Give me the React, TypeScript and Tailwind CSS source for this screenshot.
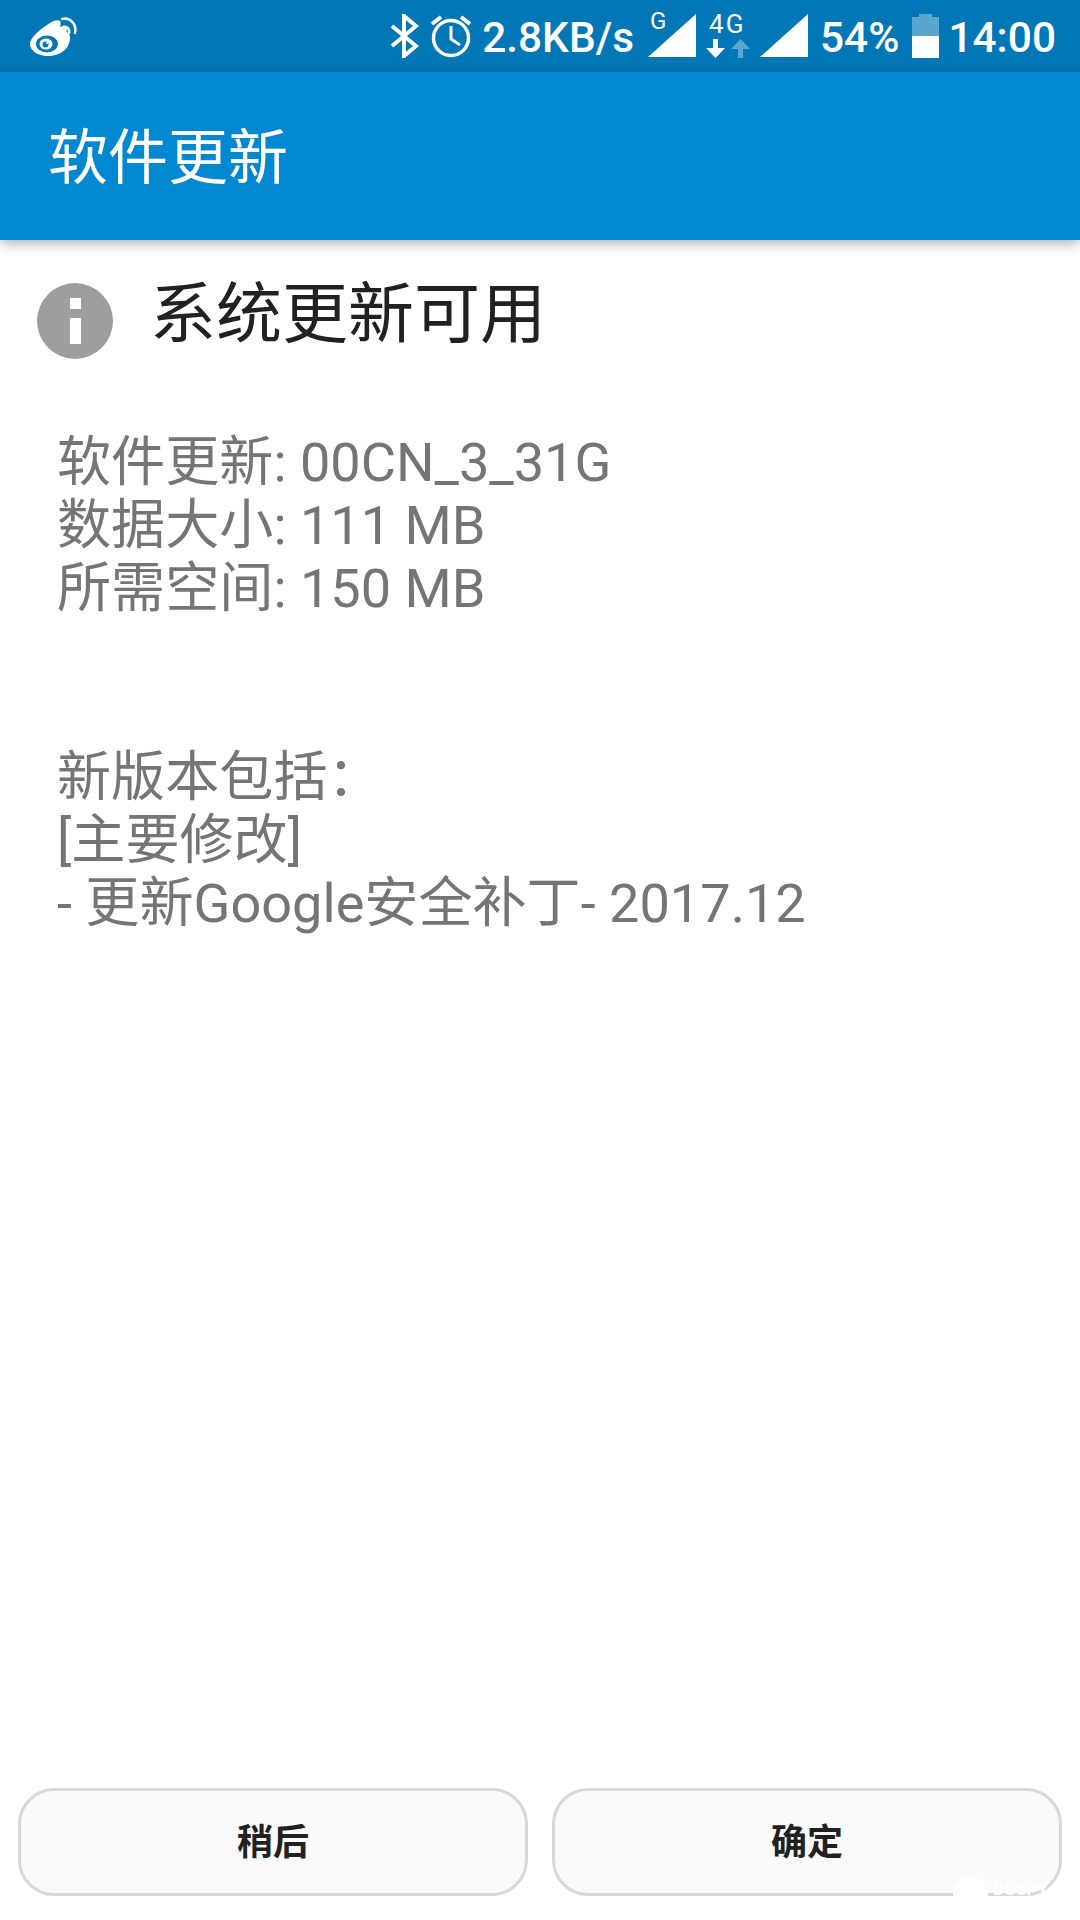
import React from 'react';

const fontStack = { fontFamily: 'Roboto, "Noto Sans CJK SC", sans-serif' };

function WeiboIcon() {
  return (
    <svg width="50" height="42" viewBox="0 0 50 42" fill="none">
      <path
        d="M18 9c5-4 11-6 13-4 1.500 1.500 .5 4 0 6 3-1 5-1 6 .5 1 1.500 1 3 .5 4.500 2.500 1 3.500 3 3.500 5.500C41 33 31 40 19 40 9 40 1 35 1 28 1 22 10 14 18 9z"
        fill="white"
      />
      <ellipse cx="18" cy="28" rx="11" ry="8.500" fill="#0277b5" />
      <ellipse cx="17" cy="28" rx="6.500" ry="5.500" fill="white" />
      <circle cx="16.500" cy="28.500" r="3" fill="#0277b5" />
      <circle cx="18" cy="27" r="1" fill="white" />
      <path d="M34 11c4-1 7 2 6 6" stroke="white" strokeWidth="2.500" strokeLinecap="round" />
      <path d="M33 3c8-2 15 5 13 14" stroke="white" strokeWidth="2.500" strokeLinecap="round" />
    </svg>
  );
}

function BluetoothIcon() {
  return (
    <svg width="30" height="44" viewBox="0 0 30 44" fill="none">
      <path d="M3 12l24 20-12 10V2l12 10L3 32" stroke="white" strokeWidth="4" />
    </svg>
  );
}

function AlarmIcon() {
  return (
    <svg width="42" height="44" viewBox="0 0 42 44" fill="none">
      <circle cx="21" cy="24" r="17.500" stroke="white" strokeWidth="3.500" />
      <path d="M21 12v13l9 6" stroke="white" strokeWidth="3" />
      <path d="M2 10l9-7M40 10l-9-7" stroke="white" strokeWidth="4" />
    </svg>
  );
}

function SignalIcon() {
  return (
    <svg width="48" height="44" viewBox="0 0 48 44">
      <path d="M0 43L48 0v43z" fill="white" />
    </svg>
  );
}

function BatteryIcon() {
  return (
    <svg width="27" height="44" viewBox="0 0 27 44">
      <path d="M7 0h13v3h7v41H0V3h7z" fill="white" fillOpacity="0.35" />
      <path d="M0 22h27v22H0z" fill="white" />
    </svg>
  );
}

function FourGIcon() {
  return (
    <div className="relative w-[44px] h-[46px]">
      <span className="absolute left-[3px] top-[-3px] text-[26px] leading-[28px] tracking-[2px] font-normal text-white">4G</span>
      <svg className="absolute left-0 top-[26px]" width="44" height="20" viewBox="0 0 44 20">
        <path d="M7 0h5v9h7l-9.500 10L0 9h7z" fill="white" />
        <path d="M32 19h5v-9h7L34.500 0 25 10h7z" fill="white" fillOpacity="0.35" />
      </svg>
    </div>
  );
}

function StatusBar() {
  return (
    <div className="h-[72px] bg-[#0277b5] flex items-center justify-between pl-[29px] pr-[24px] text-white">
      <div className="pt-[2px]"><WeiboIcon /></div>
      <div className="flex items-center text-[42.4px] leading-[46px] font-medium">
        <BluetoothIcon />
        <div className="ml-[11px]"><AlarmIcon /></div>
        <span className="ml-[10px] pt-[3px]">2.8KB/s</span>
        <div className="relative ml-[14px] w-[48px] h-[44px]">
          <span className="absolute left-[2px] top-[-6px] text-[24px] leading-[26px] font-normal">G</span>
          <SignalIcon />
        </div>
        <div className="ml-[10px]"><FourGIcon /></div>
        <div className="ml-[10px]"><SignalIcon /></div>
        <span className="ml-[12px] pt-[3px]">54%</span>
        <div className="ml-[13px]"><BatteryIcon /></div>
        <span className="ml-[9px] pt-[3px]">14:00</span>
      </div>
    </div>
  );
}

const details = `软件更新: 00CN_3_31G
数据大小: 111 MB
所需空间: 150 MB


新版本包括：
[主要修改]
- 更新Google安全补丁- 2017.12`;

export default function App() {
  return (
    <div className="w-[1080px] h-[1920px] bg-white flex flex-col overflow-hidden relative" style={fontStack}>
      <StatusBar />
      <div className="h-[168px] bg-[#0288d1] flex items-center pl-[48px] pt-[5px] shadow-[0_4px_12px_rgba(0,0,0,0.3)] relative">
        <h1 className="text-[60px] leading-none font-normal text-white">软件更新</h1>
      </div>

      <div className="flex-1 flex flex-col">
        <div className="flex items-center pl-[37px] mt-[43px]">
          <div className="w-[76px] h-[76px] rounded-full bg-[#9e9e9e] flex flex-col items-center justify-center gap-[9px]">
            <div className="w-[11px] h-[11px] bg-white" />
            <div className="w-[11px] h-[26px] bg-white" />
          </div>
          <h2 className="ml-[37px] text-[66px] leading-none font-normal text-[#212121] -mt-[12px]">系统更新可用</h2>
        </div>
        <p className="ml-[57px] mt-[72px] text-[54.1px] leading-[63px] text-[#757575] whitespace-pre-line">{details}</p>
      </div>

      <div className="flex gap-[24px] px-[18px] pb-[24px]">
        <button className="flex-1 h-[108px] pt-[2px] rounded-[36px] border-[3px] border-[#d8d8d8] bg-[#fafafa] text-[36px] font-bold text-[#212121]">稍后</button>
        <button className="flex-1 h-[108px] pt-[2px] rounded-[36px] border-[3px] border-[#d8d8d8] bg-[#fafafa] text-[36px] font-bold text-[#212121]">确定</button>
      </div>

      <div className="absolute left-[953px] top-[1877px] flex items-start gap-[5px] text-white">
        <div className="w-[35px] h-[35px] rounded-full bg-white" />
        <span className="mt-[5px] text-[17px] leading-[14px] font-bold">DOSPY</span>
      </div>
    </div>
  );
}
